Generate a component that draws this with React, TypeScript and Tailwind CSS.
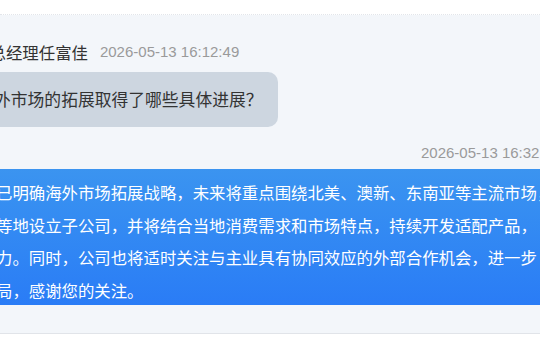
import React from "react";

// only the part of each line that shows in the frame
const answerLines = [
  "已明确海外市场拓展战略，未来将重点围绕北美、澳新、东南亚等主流市场，",
  "等地设立子公司，并将结合当地消费需求和市场特点，持续开发适配产品，",
  "力。同时，公司也将适时关注与主业具有协同效应的外部合作机会，进一步",
  "局，感谢您的关注。",
];

const font = { fontFamily: '"Noto Sans CJK SC", "Noto Sans", sans-serif' };

export default function App() {
  return (
    <div className="w-[540px] h-[360px] overflow-hidden bg-white" style={font}>
      {/* top edge */}
      <div className="h-[15px] border-b border-dotted border-[#e2e5ea]" />

      {/* Chat area */}
      <div className="h-[319px] bg-[#f3f6fa] border-b border-[#e1e4e9] overflow-hidden">
        <div className="-ml-[26px] w-[640px] pt-[26px]">
          {/* Question header */}
          <div className="flex items-center h-[22px] pl-[15.6px]">
            <span className="text-[16.4px] text-[#333] whitespace-nowrap">总经理任富佳</span>
            <span className="ml-3 text-[15px] text-[#9a9a9a] whitespace-nowrap font-['Liberation_Sans',sans-serif]">
              2026-05-13 16:12:49
            </span>
          </div>

          {/* Question bubble */}
          <div className="mt-[9px] flex">
            <div className="h-[55px] flex items-center pl-[20px] pr-[15px] rounded-[10px] bg-[#cdd6e0] text-[16.8px] text-[#333] whitespace-nowrap">
              外市场的拓展取得了哪些具体进展？
            </div>
          </div>

          {/* Answer header */}
          <div className="mt-[16px] h-[20px] flex items-center pl-[447px]">
            <span className="text-[15px] text-[#9a9a9a] whitespace-nowrap font-['Liberation_Sans',sans-serif]">
              2026-05-13 16:32:08
            </span>
          </div>

          {/* Answer bubble */}
          <div className="mt-[6px] w-[640px] h-[136px] rounded-[10px] bg-gradient-to-b from-[#3b94f0] to-[#2a7cf6] pt-[7px] pl-[22px] text-white text-[16.4px] leading-[32.5px] overflow-hidden">
            {answerLines.map((line, i) => (
              <div key={i} className="whitespace-nowrap">
                {line}
              </div>
            ))}
          </div>
        </div>
      </div>
    </div>
  );
}
